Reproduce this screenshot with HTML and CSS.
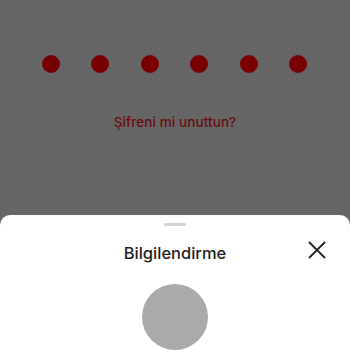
FILE: index.html
```html
<!DOCTYPE html>
<html lang="tr">
<head>
<meta charset="utf-8">
<link rel="stylesheet" href="styles.css">
</head>
<body>
<div class="screen">
  <div class="top">
    <div class="dots">
      <span class="dot"></span><span class="dot"></span><span class="dot"></span>
      <span class="dot"></span><span class="dot"></span><span class="dot"></span>
    </div>
    <div class="forgot">Şifreni mi unuttun?</div>
  </div>
  <div class="sheet">
    <div class="handle"></div>
    <div class="header">
      <div class="title">Bilgilendirme</div>
      <svg class="close" width="18" height="18" viewBox="0 0 18 18">
        <path d="M1 1 L17 17 M17 1 L1 17" stroke="#222" stroke-width="1.8" fill="none"/>
      </svg>
    </div>
    <div class="avatar"></div>
  </div>
</div>
</body>
</html>
```
FILE: styles.css
```css
html, body {
  margin: 0;
  padding: 0;
  width: 350px;
  height: 350px;
  overflow: hidden;
  background: #666666;
  font-family: "Inter", "Noto Sans", sans-serif;
}
.screen {
  display: flex;
  flex-direction: column;
  height: 350px;
}
.top {
  height: 215px;
  flex-shrink: 0;
  display: flex;
  flex-direction: column;
  align-items: center;
}
.dots {
  display: flex;
  gap: 31.4px;
  margin-top: 55px;
  margin-left: -1px;
}
.dot {
  width: 18px;
  height: 18px;
  border-radius: 50%;
  background: #780000;
}
.forgot {
  margin-top: 41px;
  font-size: 13.5px;
  font-weight: 500;
  color: #6b0b0b;
  letter-spacing: 0.1px;
}
.sheet {
  flex: 1;
  min-height: 0;
  overflow: hidden;
  background: #ffffff;
  border-radius: 10px 10px 0 0;
  display: flex;
  flex-direction: column;
  align-items: center;
}
.handle {
  width: 22px;
  height: 3px;
  border-radius: 2px;
  background: #d4d4d4;
  margin-top: 8px;
  flex-shrink: 0;
}
.header {
  position: relative;
  width: 100%;
  height: 30px;
  margin-top: 12px;
  flex-shrink: 0;
  display: flex;
  align-items: center;
  justify-content: center;
}
.title {
  font-size: 16.5px;
  font-weight: 500;
  color: #1e1e1e;
}
.close {
  position: absolute;
  right: 24px;
  top: 3px;
}
.avatar {
  width: 66px;
  height: 66px;
  flex-shrink: 0;
  border-radius: 50%;
  background: #aaa9ab;
  margin-top: 16px;
}
```
